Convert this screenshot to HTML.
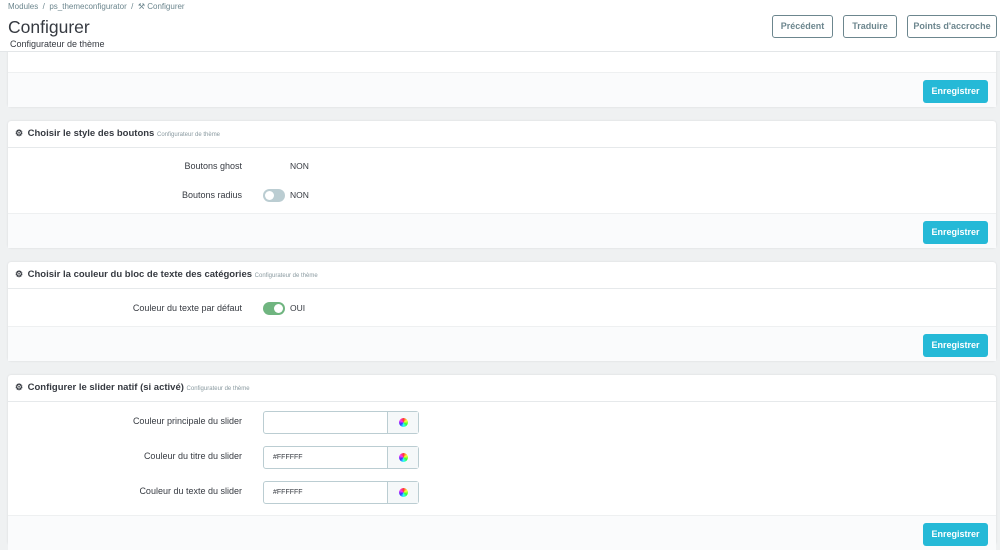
<!DOCTYPE html>
<html><head><meta charset="utf-8"><style>
*{box-sizing:border-box;margin:0;padding:0}
body{width:1000px;height:545px;overflow:hidden;background:#eff1f2;font-family:"Liberation Sans",sans-serif;color:#363a41;position:relative}
.hdr{position:absolute;left:0;top:0;width:1000px;height:52px;background:#fff;border-bottom:1px solid #e3e6e8;z-index:2}
.bc{position:absolute;left:8px;top:2px;font-size:8px;color:#6c868e}
.h1{position:absolute;left:8px;top:17px;font-size:17.5px;color:#363a41}
.sub{position:absolute;left:10px;top:39px;font-size:9px;color:#363a41}
.hb{position:absolute;top:15px;height:23px;border:1px solid #6c868e;border-radius:3px;background:#fff;font-size:9px;font-weight:bold;color:#6c868e;text-align:center;line-height:21px}
.panel{position:absolute;left:8px;width:988px;background:#fff;box-shadow:0 0 2px rgba(0,0,0,.1);border-radius:3px}
.ph{height:27px;border-bottom:1px solid #e6e9eb;font-size:9.5px;font-weight:bold;padding:7px 0 0 7px;white-space:nowrap}
.ph small{font-size:6px;font-weight:normal;color:#8a9aa0}
.ft{position:absolute;left:0;right:0;bottom:0;height:35px;background:#fafbfc;border-top:1px solid #eef0f1}
.btn{position:absolute;right:8px;top:7px;width:65px;height:23px;background:#25b9d7;border-radius:3px;color:#fff;font-size:9px;font-weight:bold;text-align:center;line-height:23px}
.lbl{position:absolute;right:754px;font-size:9px;color:#363a41;text-align:right;white-space:nowrap}
.val{position:absolute;left:282px;font-size:8.5px;color:#363a41}
.tg{position:absolute;left:255px;width:22px;height:13px;border-radius:7px}
.tg i{position:absolute;top:2px;width:9px;height:9px;border-radius:50%;background:#fff}
.inp{position:absolute;left:255px;width:156px;height:23px;border:1px solid #bbcdd2;border-radius:3px;background:#fff;font-size:7px;padding-left:9px;line-height:21px}
.inp b{position:absolute;right:0;top:0;width:31px;height:21px;border-left:1px solid #bbcdd2;background:#f5f8f9}
.inp b i{position:absolute;left:11px;top:6px;width:9px;height:9px;border-radius:50%;background:conic-gradient(#f33,#ff3,#3f3,#3ff,#33f,#f3f,#f33)}
.gear{display:inline-block;width:10px;font-size:9px}
</style></head><body>
<div class="hdr">
<div class="bc">Modules &nbsp;/&nbsp; ps_themeconfigurator &nbsp;/&nbsp; ⚒ Configurer</div>
<div class="h1">Configurer</div>
<div class="sub">Configurateur de thème</div>
<div class="hb" style="left:772px;width:61px">Précédent</div>
<div class="hb" style="left:843px;width:54px">Traduire</div>
<div class="hb" style="left:907px;width:90px">Points d'accroche</div>
</div>
<div class="panel" style="top:40px;height:67px"><div class="ft"><div class="btn">Enregistrer</div></div></div>

<div class="panel" style="top:121px;height:127px">
<div class="ph"><span class="gear">⚙</span> Choisir le style des boutons <small>Configurateur de thème</small></div>
<div class="lbl" style="top:40px">Boutons ghost</div><div class="val" style="top:40px">NON</div>
<div class="lbl" style="top:69px">Boutons radius</div><div class="tg" style="top:68px;background:#bbcdd2"><i style="left:2px"></i></div><div class="val" style="top:69px">NON</div>
<div class="ft"><div class="btn">Enregistrer</div></div>
</div>

<div class="panel" style="top:262px;height:99px">
<div class="ph"><span class="gear">⚙</span> Choisir la couleur du bloc de texte des catégories <small>Configurateur de thème</small></div>
<div class="lbl" style="top:41px">Couleur du texte par défaut</div><div class="tg" style="top:40px;background:#70b580"><i style="left:11px"></i></div><div class="val" style="top:41px">OUI</div>
<div class="ft"><div class="btn">Enregistrer</div></div>
</div>

<div class="panel" style="top:375px;height:170px">
<div class="ph"><span class="gear">⚙</span> Configurer le slider natif (si activé) <small>Configurateur de thème</small></div>
<div class="lbl" style="top:41px">Couleur principale du slider</div><div class="inp" style="top:36px"><b><i></i></b></div>
<div class="lbl" style="top:76px">Couleur du titre du slider</div><div class="inp" style="top:71px">#FFFFFF<b><i></i></b></div>
<div class="lbl" style="top:111px">Couleur du texte du slider</div><div class="inp" style="top:106px">#FFFFFF<b><i></i></b></div>
<div class="ft" style="top:140px;bottom:auto"><div class="btn">Enregistrer</div></div>
</div>
</body></html>
